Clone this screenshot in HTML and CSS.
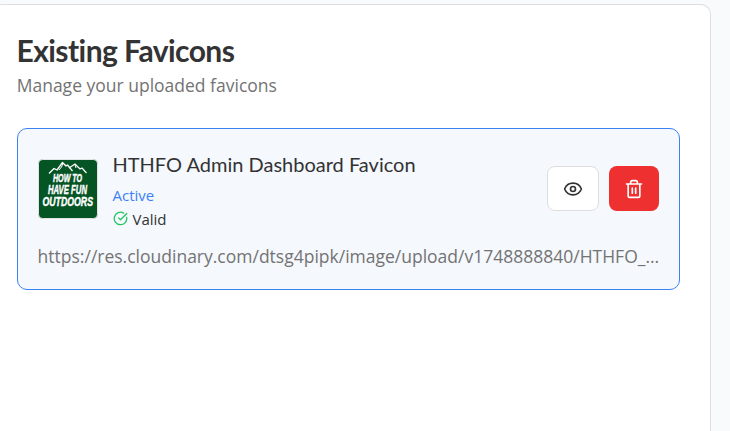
FILE: index.html
```html
<!DOCTYPE html>
<html lang="en">
<head>
<meta charset="utf-8">
<title>Existing Favicons</title>
<link rel="stylesheet" href="styles.css">
</head>
<body>
<section class="panel">
  <header class="panel-header">
    <h2 class="panel-title">Existing Favicons</h2>
    <p class="panel-description">Manage your uploaded favicons</p>
  </header>
  <article class="favicon-card">
    <div class="favicon-row">
      <svg class="thumb" viewBox="0 0 60 60" role="img" aria-label="How to have fun outdoors">
        <rect x=".5" y=".5" width="59" height="59" rx="4" fill="#055424" stroke="#e0e5e3"/>
        <g fill="none" stroke="#fff" stroke-linejoin="round">
          <path d="M11 14.5 16 9.500 19 11 24.500 3.500 28 7 29.500 6 34.500 12" stroke-width="1.300"/>
          <path d="M31 9 37 5 42 10 44 9 48.500 14" stroke-width="1.200"/>
          <path d="M25 4 23.500 8 21 11M37 6 38 9" stroke-width="1"/>
        </g>
        <g class="thumb-text">
          <text x="15" y="23" textLength="29" lengthAdjust="spacingAndGlyphs" font-size="11.500">HOW TO</text>
          <text x="10" y="34.500" textLength="39" lengthAdjust="spacingAndGlyphs" font-size="12.500">HAVE FUN</text>
          <text x="4.500" y="46.500" textLength="50.500" lengthAdjust="spacingAndGlyphs" font-size="13.500">OUTDOORS</text>
        </g>
      </svg>
      <div class="details">
        <h3 class="favicon-name">HTHFO Admin Dashboard Favicon</h3>
        <div class="active">Active</div>
        <div class="status">
          <svg class="check" viewBox="0 0 24 24"><path d="M21.801 10A10 10 0 1 1 17 3.335"/><path d="m9 11 3 3L22 4"/></svg>
          <span>Valid</span>
        </div>
      </div>
      <div class="actions">
        <button class="btn btn-view" aria-label="View"><svg class="icon" viewBox="0 0 24 24"><path d="M2.062 12.348a1 1 0 0 1 0-.696 10.750 10.750 0 0 1 19.876 0 1 1 0 0 1 0 .696 10.750 10.750 0 0 1-19.876 0"/><circle cx="12" cy="12" r="3"/></svg></button>
        <button class="btn btn-delete" aria-label="Delete"><svg class="icon" viewBox="0 0 24 24"><path d="M3 6h18M19 6v14c0 1-1 2-2 2H7c-1 0-2-1-2-2V6M8 6V4c0-1 1-2 2-2h4c1 0 2 1 2 2v2M10 11v6M14 11v6"/></svg></button>
      </div>
    </div>
    <p class="url">https://res.cloudinary.com/dtsg4pipk/image/upload/v1748888840/HTHFO_…</p>
  </article>
</section>
</body>
</html>
```
FILE: styles.css
```css
* { box-sizing: border-box; }
body {
  margin: 0;
  height: 431px;
  overflow: hidden;
  padding-top: 4px;
  background: #f9fafc;
  color: #333;
  font-family: "Open Sans", sans-serif;
}
h2, h3, p { margin: 0; }
.panel {
  width: 719px;
  height: 427px;
  margin-left: -8px;
  padding: 30px 30px 0 24px;
  background: #fff;
  border: 1px solid #dedede;
  border-bottom: 0;
  border-radius: 10px 10px 0 0;
}
.panel-title {
  font: 700 30px/30px Lato, sans-serif;
  letter-spacing: -.56px;
  margin-left: -.5px;
}
.panel-description {
  margin-top: 8px;
  margin-left: -.3px;
  font-size: 17.5px;
  line-height: 25px;
  color: #737373;
}
.favicon-card {
  height: 162px;
  margin-top: 30px;
  padding: 20px;
  background: #f5f8fd;
  border: 1px solid #3b82f6;
  border-radius: 10px;
}
.favicon-row {
  display: flex;
  align-items: center;
  height: 80px;
}
.thumb { width: 60px; height: 60px; }
.thumb-text {
  fill: #fff;
  stroke: #fff;
  stroke-width: .45px;
  font-family: "Liberation Sans", sans-serif;
  font-style: italic;
  font-weight: 700;
}
.details { flex: 1; margin-left: 14.5px; }
.favicon-name {
  font: 400 20px/30px Lato, sans-serif;
}
.active {
  font-size: 15px;
  font-weight: 500;
  line-height: 20px;
  margin-top: 6px;
  color: #3b82f6;
}
.status {
  display: flex;
  align-items: center;
  gap: 5px;
  margin-top: 4px;
  font-size: 15px;
  line-height: 20px;
}
svg { fill: none; }
.check, .icon {
  stroke: currentColor;
  stroke-width: 2;
  stroke-linecap: round;
  stroke-linejoin: round;
}
.check { width: 15px; height: 15px; margin-top: -1px; color: #22c55e; }
.icon { width: 20px; height: 20px; }
.actions { display: flex; gap: 10px; margin-top: -1px; }
.btn {
  display: flex;
  align-items: center;
  justify-content: center;
  height: 45px;
  padding: 0;
  border: 0;
  border-radius: 8px;
}
.btn-view { width: 52px; background: #fff; border: 1px solid #dedede; color: #333; }
.btn-delete { width: 50px; background: #ee3030; color: #fff; }
.url {
  margin: 15px -2px 0 -.4px;
  white-space: nowrap;
  font-size: 17.5px;
  line-height: 25px;
  color: #737373;
}
```
